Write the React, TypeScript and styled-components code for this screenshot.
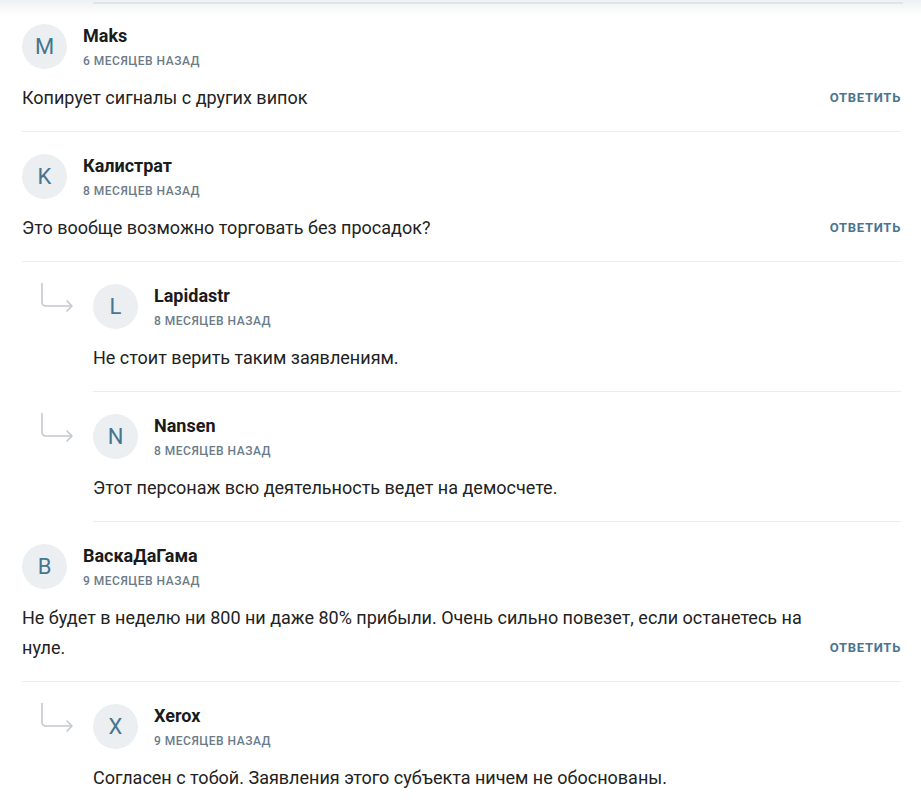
import styled, { createGlobalStyle } from 'styled-components'

type Reply = { id: string; author: string; date: string; text: string }
type Comment = Reply & { replies: Reply[] }

const comments: Comment[] = [
  {
    id: 'c1',
    author: 'Maks',
    date: '6 месяцев назад',
    text: 'Копирует сигналы с других випок',
    replies: [],
  },
  {
    id: 'c2',
    author: 'Калистрат',
    date: '8 месяцев назад',
    text: 'Это вообще возможно торговать без просадок?',
    replies: [
      { id: 'r1', author: 'Lapidastr', date: '8 месяцев назад', text: 'Не стоит верить таким заявлениям.' },
      { id: 'r2', author: 'Nansen', date: '8 месяцев назад', text: 'Этот персонаж всю деятельность ведет на демосчете.' },
    ],
  },
  {
    id: 'c3',
    author: 'ВаскаДаГама',
    date: '9 месяцев назад',
    text: 'Не будет в неделю ни 800 ни даже 80% прибыли. Очень сильно повезет, если останетесь на нуле.',
    replies: [
      { id: 'r3', author: 'Xerox', date: '9 месяцев назад', text: 'Согласен с тобой. Заявления этого субъекта ничем не обоснованы.' },
    ],
  },
]

// avatars show a latin letter, even for cyrillic names
const letterFor = (name: string) => {
  const map: Record<string, string> = { Калистрат: 'K', ВаскаДаГама: 'B' }
  return map[name] ?? name[0].toUpperCase()
}

const GlobalStyle = createGlobalStyle`
  html, body {
    margin: 0;
    background: #fff;
    font-family: Roboto, "Liberation Sans", Arial, sans-serif;
    -webkit-font-smoothing: antialiased;
  }
`

const Page = styled.div`
  position: relative;
  padding: 2px 20px 0 22px;
  overflow: hidden;
`

const TopShade = styled.div`
  position: absolute;
  top: 0;
  left: 0;
  right: 0;
  height: 16px;
  background: linear-gradient(#eef1f3, rgba(255, 255, 255, 0));
  pointer-events: none;

  &::after {
    content: '';
    position: absolute;
    top: 2px;
    left: 93px;
    right: 18px;
    height: 2px;
    background: #dfe4e8;
  }
`

const Item = styled.div<{ $nested?: boolean }>`
  display: grid;
  grid-template-columns: ${({ $nested }) => ($nested ? '71px 1fr' : '1fr')};
`

const Body = styled.div`
  padding: 22px 0 18px;
  border-bottom: 1px solid #ebedef;
`

const Header = styled.div`
  display: flex;
  align-items: center;
  gap: 16px;
`

const Avatar = styled.div`
  width: 45px;
  height: 45px;
  border-radius: 50%;
  background: #ebeff2;
  color: #457590;
  display: flex;
  align-items: center;
  justify-content: center;
  font-size: 22px;
  flex: none;
`

const Meta = styled.div`
  display: flex;
  flex-direction: column;
  gap: 6px;
`

const Name = styled.div`
  font-size: 18px;
  font-weight: 700;
  color: #1b1b1b;
  line-height: 22px;
`

const Date = styled.div`
  font-size: 12px;
  font-weight: 500;
  text-transform: uppercase;
  color: #6b7b88;
  letter-spacing: 0.5px;
  line-height: 16px;
`

const Row = styled.div`
  display: flex;
  align-items: flex-end;
  gap: 20px;
  margin-top: 14px;
`

const Text = styled.p`
  flex: 1;
  margin: 0;
  font-size: 18px;
  line-height: 30px;
  color: #222;
`

const ReplyButton = styled.button`
  border: 0;
  background: none;
  padding: 0;
  font-family: inherit;
  font-size: 13px;
  font-weight: 700;
  color: #4a7590;
  letter-spacing: 0.7px;
  text-transform: uppercase;
  line-height: 30px;
  cursor: pointer;
`

const ArrowCell = styled.div`
  padding: 20px 0 0 18px;
`

function ReplyArrow() {
  return (
    <svg width="36" height="34" viewBox="0 0 36 34" fill="none" stroke="#c3c9ce" strokeWidth="1.6">
      <path d="M2 1 V20 Q2 24 6 24 H32" />
      <path d="M27 19 L32 24 L27 29" strokeLinejoin="round" strokeLinecap="round" />
    </svg>
  )
}

function Entry({ data, canReply }: { data: Reply; canReply?: boolean }) {
  return (
    <Body>
      <Header>
        <Avatar>{letterFor(data.author)}</Avatar>
        <Meta>
          <Name>{data.author}</Name>
          <Date>{data.date}</Date>
        </Meta>
      </Header>
      <Row>
        <Text>{data.text}</Text>
        {canReply && <ReplyButton>Ответить</ReplyButton>}
      </Row>
    </Body>
  )
}

export default function App() {
  return (
    <>
      <GlobalStyle />
      <Page>
        {comments.map((c) => (
          <div key={c.id}>
            <Item>
              <Entry data={c} canReply />
            </Item>
            {c.replies.map((r) => (
              <Item $nested key={r.id}>
                <ArrowCell>
                  <ReplyArrow />
                </ArrowCell>
                <Entry data={r} />
              </Item>
            ))}
          </div>
        ))}
        <TopShade />
      </Page>
    </>
  )
}
